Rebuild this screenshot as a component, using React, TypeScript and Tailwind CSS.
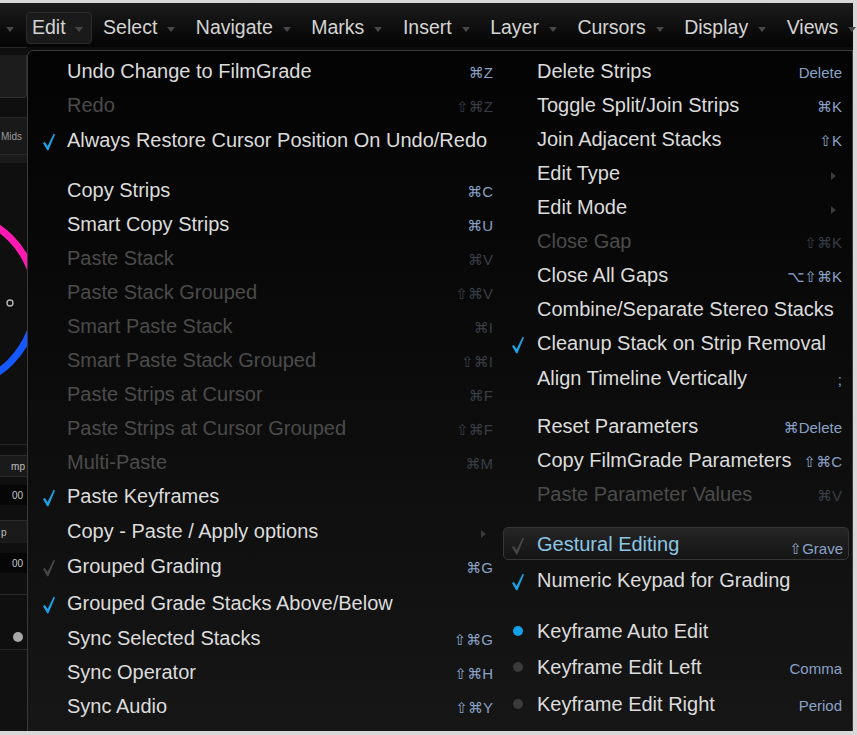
import React from 'react';

type It = {
  t: string;
  s?: string;
  d?: boolean;
  c?: 'b' | 'g';
  dot?: 'b' | 'g';
  sub?: boolean;
  h?: string;
  mt?: string;
  hl?: boolean;
};

const LEFT: It[] = [
  { t: 'Undo Change to FilmGrade', s: '⌘Z' },
  { t: 'Redo', s: '⇧⌘Z', d: true },
  { t: 'Always Restore Cursor Position On Undo/Redo', c: 'b', h: 'h-[35px]' },
  { t: 'Copy Strips', s: '⌘C', mt: 'mt-[16px]' },
  { t: 'Smart Copy Strips', s: '⌘U' },
  { t: 'Paste Stack', s: '⌘V', d: true },
  { t: 'Paste Stack Grouped', s: '⇧⌘V', d: true },
  { t: 'Smart Paste Stack', s: '⌘I', d: true },
  { t: 'Smart Paste Stack Grouped', s: '⇧⌘I', d: true },
  { t: 'Paste Strips at Cursor', s: '⌘F', d: true },
  { t: 'Paste Strips at Cursor Grouped', s: '⇧⌘F', d: true },
  { t: 'Multi-Paste', s: '⌘M', d: true },
  { t: 'Paste Keyframes', c: 'b' },
  { t: 'Copy - Paste / Apply options', sub: true, h: 'h-[35px]' },
  { t: 'Grouped Grading', c: 'g', s: '⌘G', h: 'h-[36px]' },
  { t: 'Grouped Grade Stacks Above/Below', c: 'b', h: 'h-[37px]' },
  { t: 'Sync Selected Stacks', s: '⇧⌘G' },
  { t: 'Sync Operator', s: '⇧⌘H' },
  { t: 'Sync Audio', s: '⇧⌘Y' },
];

const RIGHT: It[] = [
  { t: 'Delete Strips', s: 'Delete' },
  { t: 'Toggle Split/Join Strips', s: '⌘K' },
  { t: 'Join Adjacent Stacks', s: '⇧K' },
  { t: 'Edit Type', sub: true },
  { t: 'Edit Mode', sub: true },
  { t: 'Close Gap', s: '⇧⌘K', d: true },
  { t: 'Close All Gaps', s: '⌥⇧⌘K' },
  { t: 'Combine/Separate Stereo Stacks' },
  { t: 'Cleanup Stack on Strip Removal', c: 'b' },
  { t: 'Align Timeline Vertically', s: ';', h: 'h-[35px]' },
  { t: 'Reset Parameters', s: '⌘Delete', mt: 'mt-[14px]' },
  { t: 'Copy FilmGrade Parameters', s: '⇧⌘C' },
  { t: 'Paste Parameter Values', s: '⌘V', d: true },
  { t: 'Gestural Editing', s: '⇧Grave', c: 'g', hl: true, mt: 'mt-[16px]', h: 'h-[33px]' },
  { t: 'Numeric Keypad for Grading', c: 'b', mt: 'mt-[3px]' },
  { t: 'Keyframe Auto Edit', dot: 'b', mt: 'mt-[17px]' },
  { t: 'Keyframe Edit Left', s: 'Comma', dot: 'g', mt: 'mt-[2px]' },
  { t: 'Keyframe Edit Right', s: 'Period', dot: 'g', mt: 'mt-[3px]' },
];

function Tri() {
  return (
    <svg width="8" height="5" viewBox="0 0 8 5" className="mt-[2px] shrink-0">
      <path d="M0 0H8L4 5Z" fill="#474747" />
    </svg>
  );
}

function Check({ grey }: { grey?: boolean }) {
  return (
    <svg width="13" height="18" viewBox="0 0 13 18" className="translate-y-[2px]">
      <path d="M0 10.2 L2 9 L5 13.4 L11.5 0 L13 0.9 L5.9 18 L4.5 18 Z" fill={grey ? '#464646' : '#1ca3e6'} />
    </svg>
  );
}

function SubArrow() {
  return (
    <svg width="5" height="8" viewBox="0 0 5 8">
      <path d="M0 0L5 4L0 8Z" fill="#3a3a3a" />
    </svg>
  );
}

function Row({ it, side }: { it: It; side: 'l' | 'r' }) {
  const h = it.h ?? 'h-[34px]';
  const mt = it.mt ?? '';
  const textColor = it.hl ? 'text-[#8cc6e4]' : it.d ? 'text-[#4b4b4b]' : 'text-[#dcdcdc]';
  const scColor = it.d ? 'text-[#393e46]' : 'text-[#8aa2c8]';
  const pad = it.hl
    ? 'mx-[3px] pl-[8px] pr-[5px] rounded-[5px] border border-[#363636] bg-linear-to-b from-[#262626] to-[#141414]'
    : side === 'l'
      ? 'pl-[15px] pr-[7px]'
      : 'pl-[12px] pr-[10px]';
  return (
    <div className={`flex items-center ${h} ${mt} ${pad}`}>
      <div className="flex w-[12px] shrink-0 items-center justify-center">
        {it.c && <Check grey={it.c === 'g'} />}
        {it.dot && (
          <div className={`h-[10px] w-[10px] rounded-full ${it.dot === 'b' ? 'bg-[#12a0ea]' : 'bg-[#3a3a3a]'}`} />
        )}
      </div>
      <div className={`flex flex-1 items-baseline ${side === 'l' ? 'ml-[12px]' : 'ml-[13px]'}`}>
        <span className={`whitespace-nowrap text-[20px] leading-none ${textColor}`}>{it.t}</span>
        <span className="ml-auto flex items-center">
          {it.s && <span className={`whitespace-nowrap text-[15px] leading-none ${scColor} ${it.hl ? 'translate-y-[3px]' : ''}`}>{it.s}</span>}
          {it.sub && (
            <span className={side === 'l' ? 'mr-[7px]' : 'mr-[6px]'}>
              <SubArrow />
            </span>
          )}
        </span>
      </div>
    </div>
  );
}

function LeftStrip() {
  return (
    <div className="flex w-[27px] shrink-0 flex-col bg-[#0f0f0f] text-[10px] text-[#9a9a9a]">
      <div className="h-[1px] bg-[#262626]" />
      <div className="h-[7px]" />
      <div className="h-[43px] rounded-br-[4px] border-b border-r border-[#2e2e2e] bg-[#1c1c1c]" />
      <div className="h-[19px]" />
      <div className="flex h-[38px] items-center border-y border-[#262626] bg-[#191919] pl-[1px]">Mids</div>
      <div className="h-[8px] bg-[#1a1a1a]" />
      <svg width="27" height="270" viewBox="0 0 27 270" className="shrink-0">
        <defs>
          <linearGradient id="ring" x1="0" y1="49" x2="0" y2="225" gradientUnits="userSpaceOnUse">
            <stop offset="0" stopColor="#ff19b2" />
            <stop offset="0.5" stopColor="#ff19b2" />
            <stop offset="0.5" stopColor="#1658ff" />
            <stop offset="1" stopColor="#1658ff" />
          </linearGradient>
        </defs>
        <circle cx="-52" cy="137" r="88" fill="none" stroke="url(#ring)" strokeWidth="7" />
        <circle cx="10" cy="140" r="3" fill="none" stroke="#b5b5b5" strokeWidth="1.4" />
      </svg>
      <div className="h-[12px] border-b border-[#262626]" />
      <div className="h-[10px]" />
      <div className="flex h-[22px] items-center justify-end border-y border-[#2a2a2a] bg-[#1a1a1a] pr-[2px] text-[#c0c0c0]">mp</div>
      <div className="h-[8px]" />
      <div className="flex h-[20px] items-center justify-end bg-[#060606] pr-[4px] text-[#c8c8c8]">00</div>
      <div className="h-[16px] border-b border-[#2a2a2a]" />
      <div className="flex h-[22px] items-center bg-[#1a1a1a] pl-[1px] text-[#c0c0c0]">p</div>
      <div className="h-[10px]" />
      <div className="flex h-[20px] items-center justify-end bg-[#060606] pr-[4px] text-[#c8c8c8]">00</div>
      <div className="h-[22px] border-b border-[#2a2a2a]" />
      <div className="h-[30px]" />
      <div className="flex h-[24px] items-center justify-end pr-[4px]">
        <div className="h-[10px] w-[10px] rounded-full bg-[#a8a8a8]" />
      </div>
      <div className="flex-1 border-t border-[#262626] bg-[#111111]" />
    </div>
  );
}

export default function App() {
  return (
    <div className="h-[735px] w-[857px] overflow-hidden bg-[#d8d8d8] font-['Liberation_Sans','DejaVu_Sans',sans-serif]">
      <div className="mt-[3px] flex h-[728px] w-[853px] flex-col bg-[#0c0c0c]">
        <div className="flex h-[44px] shrink-0 items-center bg-linear-to-b from-[#1c1c1c] to-[#050505] pl-[6px] pt-[6px] text-[19.5px] text-[#d4d4d4]">
          <Tri />
          <div className="ml-[12px] flex h-[32px] items-center gap-[9px] rounded-[4px] border border-[#2c2c2c] bg-[#1a1a1a] pl-[5px] pr-[8px]">
            <span className="leading-none">Edit</span>
            <Tri />
          </div>
          {['Select', 'Navigate', 'Marks', 'Insert', 'Layer', 'Cursors', 'Display', 'Views'].map((n) => (
            <div key={n} className="ml-[5.5px] flex items-center gap-[10px] pl-[6px] pr-[9px]">
              <span className="whitespace-nowrap leading-none">{n}</span>
              <Tri />
            </div>
          ))}
        </div>
        <div className="flex flex-1">
          <LeftStrip />
          <div className="mt-[3px] flex w-[826px] rounded-tl-[6px] border-l border-r border-t border-[#3a3a3a] bg-linear-to-b from-[#040404] to-[#161616] pt-[3px]">
            <div className="flex w-[472px] flex-col">
              {LEFT.map((it) => (
                <Row key={it.t} it={it} side="l" />
              ))}
            </div>
            <div className="flex w-[352px] flex-col">
              {RIGHT.map((it) => (
                <Row key={it.t} it={it} side="r" />
              ))}
            </div>
          </div>
        </div>
      </div>
    </div>
  );
}
